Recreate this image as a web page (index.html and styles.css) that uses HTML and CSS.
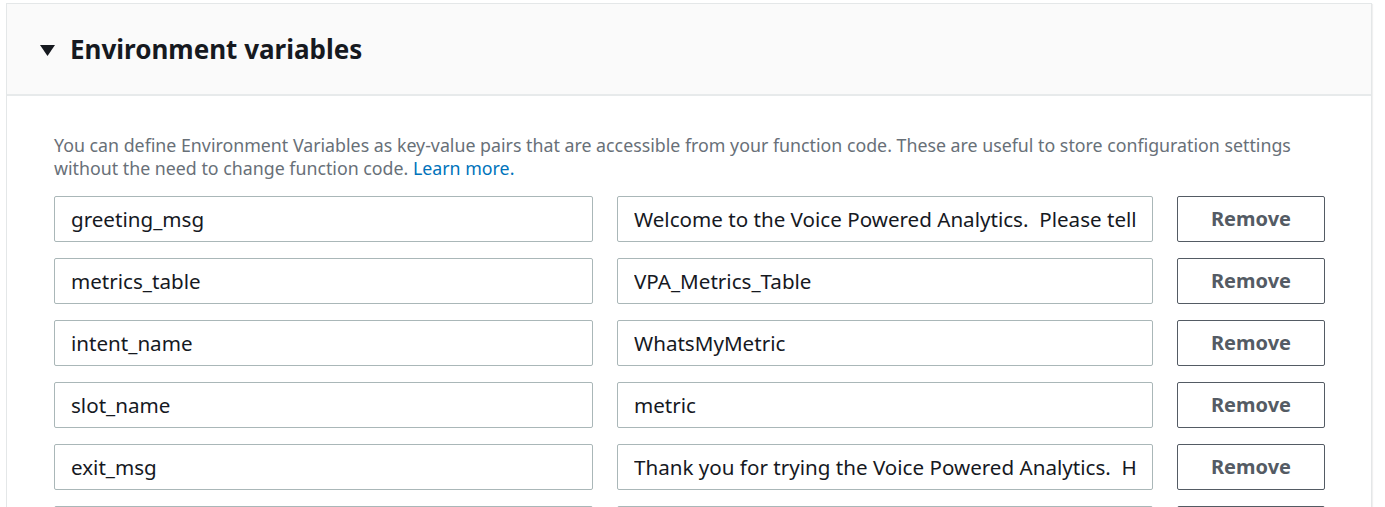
FILE: index.html
```html
<!DOCTYPE html>
<html>
<head>
<meta charset="utf-8">
<link rel="stylesheet" href="styles.css">
</head>
<body>
<section class="card">
  <header class="card-header">
    <svg class="caret" width="15" height="11" viewBox="0 0 15 11"><polygon points="0,0 15,0 7.5,11" fill="#16191f"/></svg>
    <h2 class="title">Environment variables</h2>
  </header>
  <div class="card-body">
    <p class="desc">You can define Environment Variables as key-value pairs that are accessible from your function code. These are useful to store configuration settings without the need to change function code. <a class="link" href="#">Learn more.</a></p>
    <div class="rows">
      <input class="field" type="text" value="greeting_msg">
      <input class="field" type="text" value="Welcome to the Voice Powered Analytics.  Please tell me what metric you would like to hear.">
      <button class="btn">Remove</button>

      <input class="field" type="text" value="metrics_table">
      <input class="field" type="text" value="VPA_Metrics_Table">
      <button class="btn">Remove</button>

      <input class="field" type="text" value="intent_name">
      <input class="field" type="text" value="WhatsMyMetric">
      <button class="btn">Remove</button>

      <input class="field" type="text" value="slot_name">
      <input class="field" type="text" value="metric">
      <button class="btn">Remove</button>

      <input class="field" type="text" value="exit_msg">
      <input class="field" type="text" value="Thank you for trying the Voice Powered Analytics.  Have a nice day!">
      <button class="btn">Remove</button>

      <input class="field" type="text" value="">
      <input class="field" type="text" value="">
      <button class="btn" aria-label="Remove"></button>
    </div>
  </div>
</section>
</body>
</html>
```
FILE: styles.css
```css
html, body {
  margin: 0;
  padding: 0;
  background: #ffffff;
  font-family: "Noto Sans", "Open Sans", Arial, sans-serif;
}
html {
  height: 507px;
  overflow: hidden;
}
body {
  padding: 3px 13px 0 6px;
  height: 507px;
  box-sizing: border-box;
  overflow: hidden;
}
.card {
  border: 1px solid #e4e7e8;
  border-bottom: none;
  box-shadow: 1px 1px 1px rgba(0,0,0,0.06);
  background: #fff;
}
.card-header {
  display: flex;
  align-items: center;
  background: #fafafa;
  border-bottom: 2px solid #e7eaeb;
  padding-left: 33px;
  box-sizing: border-box;
  height: 92px;
}
.caret {
  display: block;
  margin-top: 2px;
}
.title {
  margin: 0 0 0 15px;
  font-size: 26px;
  font-weight: 700;
  color: #16191f;
}
.card-body {
  padding: 38px 47px 0 47px;
}
.desc {
  margin: 0;
  font-size: 17.8px;
  line-height: 23px;
  color: #687078;
}
.link {
  color: #0073bb;
  text-decoration: none;
}
.rows {
  margin-top: 16px;
  display: grid;
  grid-template-columns: 539px 536px 148px;
  column-gap: 24px;
  row-gap: 16px;
}
.field {
  height: 46px;
  box-sizing: border-box;
  border: 1px solid #aab7b8;
  border-radius: 2px;
  padding: 0 16px;
  font-family: inherit;
  font-size: 20.6px;
  color: #16191f;
  background: #fff;
  outline: none;
  min-width: 0;
  width: 100%;
}
.btn {
  height: 46px;
  box-sizing: border-box;
  border: 1px solid #545b64;
  border-radius: 2px;
  background: #fff;
  color: #545b64;
  font-family: inherit;
  font-size: 20px;
  font-weight: 700;
  padding: 0 0 2px 0;
}
```
